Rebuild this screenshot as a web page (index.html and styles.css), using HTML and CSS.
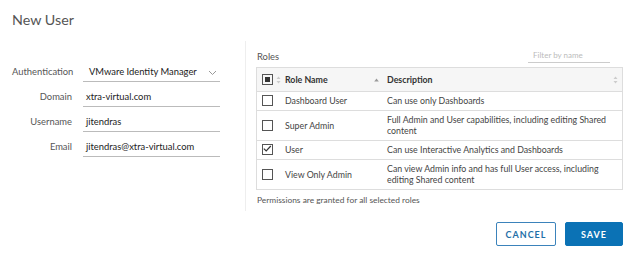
FILE: index.html
```html
<html>

<head>
    <link rel="stylesheet" href="styles.css">
</head>

<body>
    <div class="dialog">
        <h1 class="title">New User</h1>

        <div class="content">
            <div class="user-form">
                <label class="field-label">Authentication</label>
                <div class="field select">VMware Identity Manager
                    <svg class="chevron" width="9" height="6" viewBox="0 0 9 6"><path d="M1 1l3.5 3.5L8 1" fill="none" stroke="#999" stroke-width="1"/></svg>
                </div>
                <label class="field-label">Domain</label>
                <div class="field">xtra-virtual.com</div>
                <label class="field-label">Username</label>
                <div class="field">jitendras</div>
                <label class="field-label">Email</label>
                <div class="field">jitendras@xtra-virtual.com</div>
            </div>

            <div class="roles">
                <div class="roles-head">
                    <span class="roles-title">Roles</span>
                    <div class="filter">Filter by name</div>
                </div>

                <table class="grid">
                    <thead>
                        <tr>
                            <th class="col-check"><span class="box partial"></span><svg class="sort" width="5" height="8" viewBox="0 0 5 8"><path d="M2.5 0.5L4.5 3H0.5zM2.5 7.5L4.5 5H0.5z" fill="#ccc"/></svg></th>
                            <th class="col-name">Role Name <svg class="asc" width="5" height="4" viewBox="0 0 5 4"><path d="M2.5 0.5L4.8 3.5H0.2z" fill="#999"/></svg></th>
                            <th class="col-desc">Description <svg class="sort right" width="5" height="8" viewBox="0 0 5 8"><path d="M2.5 0.5L4.5 3H0.5zM2.5 7.5L4.5 5H0.5z" fill="#ccc"/></svg></th>
                        </tr>
                    </thead>
                    <tbody>
                        <tr>
                            <td class="col-check"><span class="box"></span></td>
                            <td>Dashboard User</td>
                            <td>Can use only Dashboards</td>
                        </tr>
                        <tr>
                            <td class="col-check"><span class="box"></span></td>
                            <td>Super Admin</td>
                            <td>Full Admin and User capabilities, including editing Shared content</td>
                        </tr>
                        <tr>
                            <td class="col-check"><span class="box checked"><svg width="10" height="10" viewBox="0 0 10 10"><path d="M1.8 4.6l2.4 2.4 4.6-5" fill="none" stroke="#333" stroke-width="1.2"/></svg></span></td>
                            <td>User</td>
                            <td>Can use Interactive Analytics and Dashboards</td>
                        </tr>
                        <tr>
                            <td class="col-check"><span class="box"></span></td>
                            <td>View Only Admin</td>
                            <td>Can view Admin info and has full User access, including editing Shared content</td>
                        </tr>
                    </tbody>
                </table>

                <p class="note">Permissions are granted for all selected roles</p>
            </div>
        </div>

        <div class="actions">
            <button class="btn btn-outline">CANCEL</button>
            <button class="btn btn-primary">SAVE</button>
        </div>
    </div>
</body>

</html>
```

FILE: styles.css
```css
body {
    margin: 0;
    background: #fff;
    font-family: Lato, "Liberation Sans", sans-serif;
    color: #333;
}

.dialog {
    padding: 11px 7px 0 12px;
}

.title {
    margin: 0;
    font-size: 14.3px;
    font-weight: normal;
    color: #555;
    line-height: 18px;
}

.content {
    display: flex;
    margin-top: 12px;
}

.user-form {
    width: 234px;
    display: grid;
    grid-template-columns: 60px 137px;
    column-gap: 11px;
    row-gap: 6px;
    align-content: start;
    margin-top: 22px;
    font-size: 9.4px;
}

.field-label {
    text-align: right;
    color: #565656;
    line-height: 18px;
}

.field {
    line-height: 18px;
    border-bottom: 1px solid #bbb;
    padding-left: 3px;
    color: #222;
    position: relative;
}

.select {
    padding-left: 6px;
}

.chevron {
    position: absolute;
    right: 3px;
    top: 7px;
}

.roles {
    border-left: 1px solid #eee;
    padding-left: 10px;
    padding-bottom: 6px;
    width: 367px;
}

.roles-head {
    display: flex;
    justify-content: space-between;
    align-items: flex-end;
    height: 26px;
}

.roles-title {
    font-size: 9.4px;
    color: #555;
    line-height: 14px;
    margin-bottom: 3px;
    margin-left: 1px;
}

.filter {
    width: 77px;
    margin-right: 13px;
    margin-bottom: 4px;
    padding-left: 5px;
    font-size: 8px;
    color: #bbb;
    border-bottom: 1px solid #ccc;
    line-height: 13px;
}

.grid {
    width: 367px;
    border-collapse: collapse;
    border: 1px solid #ddd;
    font-size: 8.8px;
}

.grid th {
    background: #f6f6f6;
    height: 24px;
    text-align: left;
    font-weight: bold;
    color: #333;
    padding: 0 4px;
    border-bottom: 1px solid #ddd;
}

.grid td {
    padding: 3px 8px 4px 4px;
    line-height: 11px;
    color: #444;
    border-bottom: 1px solid #ddd;
}

.grid td.col-check,
.grid th.col-check {
    width: 18px;
    padding-left: 5px;
    padding-right: 0;
    white-space: nowrap;
}

.grid .col-name {
    width: 94px;
}

.asc {
    float: right;
    margin-top: 4px;
}

.box {
    display: inline-block;
    width: 9px;
    height: 9px;
    border: 1px solid #555;
    vertical-align: middle;
    position: relative;
}

.box.partial::after {
    content: "";
    position: absolute;
    left: 2px;
    top: 2px;
    width: 5px;
    height: 5px;
    background: #333;
}

.box.checked svg {
    position: absolute;
    left: -1px;
    top: -1px;
}

.sort {
    margin-left: 3px;
    vertical-align: middle;
}

.sort.right {
    float: right;
    margin-top: 2px;
}

.note {
    margin: 5px 0 0 1px;
    font-size: 8.4px;
    color: #555;
}

.actions {
    display: flex;
    justify-content: flex-end;
    gap: 9px;
    margin-top: 11px;
}

.btn {
    height: 24px;
    padding: 0;
    font-family: inherit;
    font-size: 9px;
    font-weight: bold;
    letter-spacing: 1px;
    border-radius: 2px;
    cursor: pointer;
}

.btn-outline {
    width: 60px;
    background: #fff;
    color: #1f6fa8;
    border: 1px solid #3b83bb;
}

.btn-primary {
    width: 58px;
    background: #0b72b5;
    color: #fff;
    border: 1px solid #0b72b5;
}
```
